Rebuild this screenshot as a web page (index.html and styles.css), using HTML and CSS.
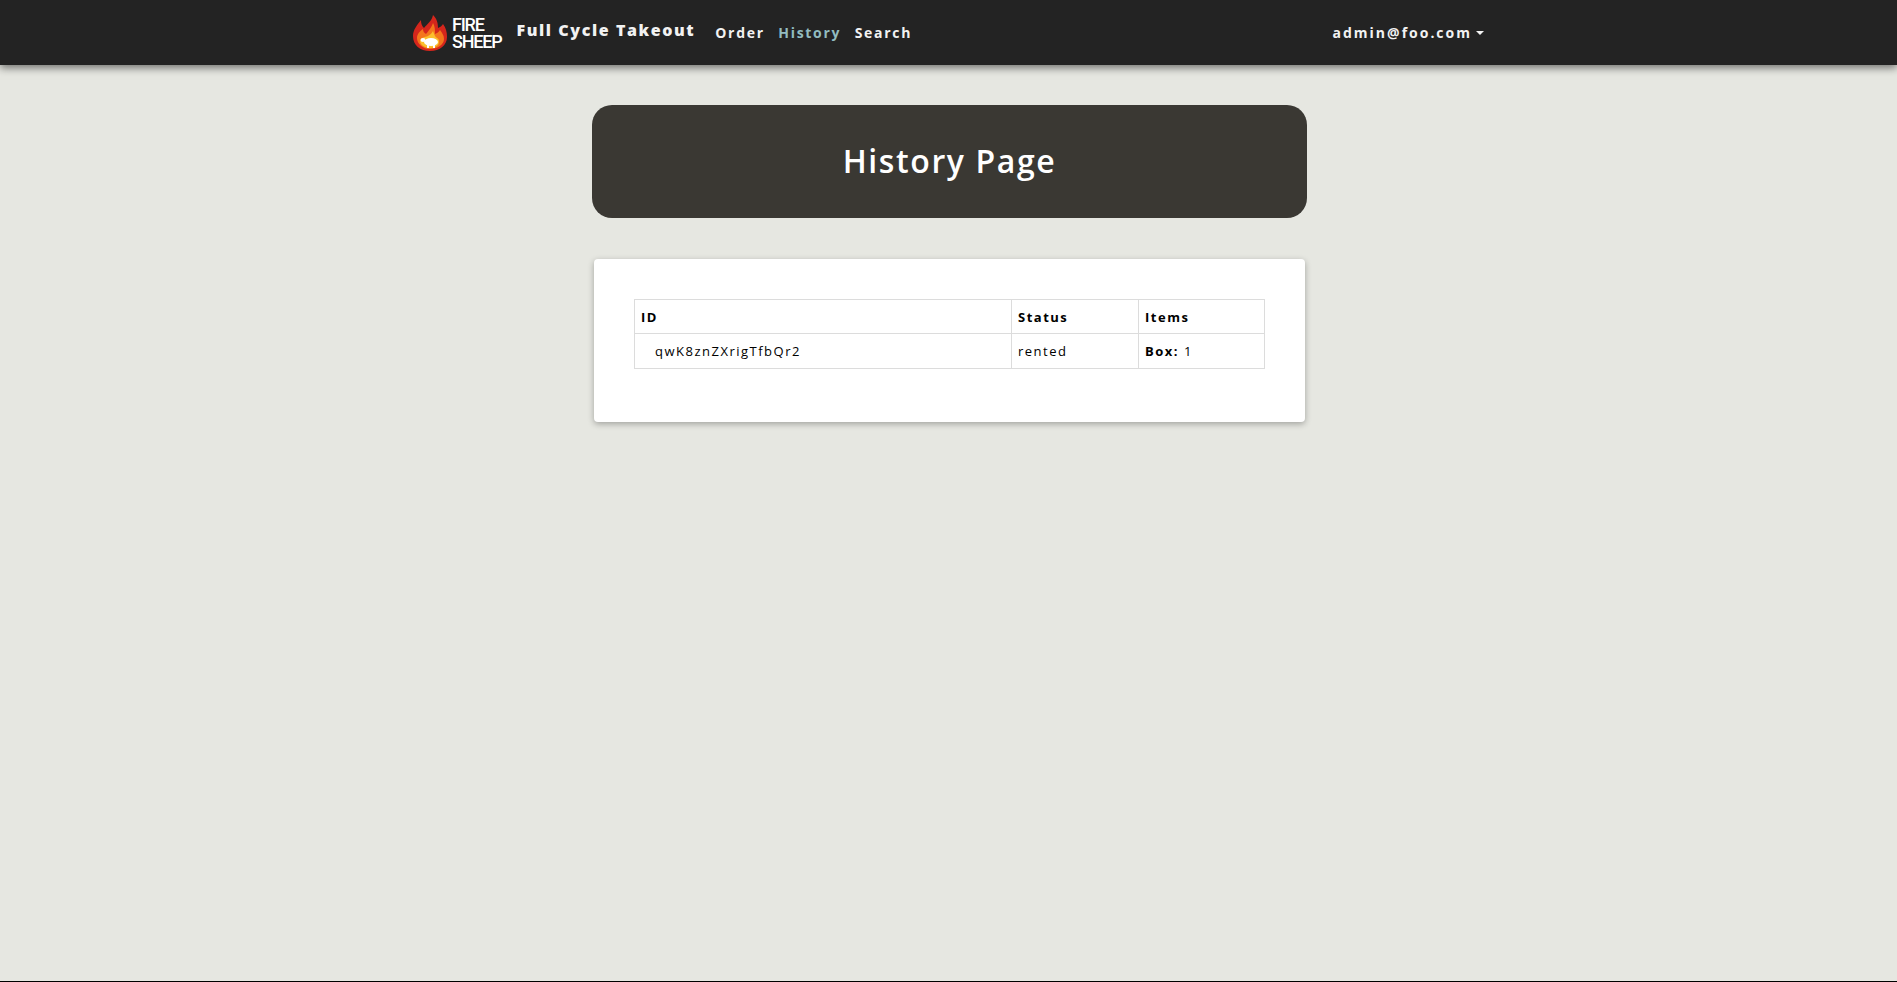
FILE: index.html
```html
<!DOCTYPE html>
<html lang="en">
<head>
  <meta charset="UTF-8" />
  <meta name="viewport" content="width=device-width, initial-scale=1.0"/>
  <title>Full Cycle Takeout - History</title>
  <link rel="stylesheet" href="styles.css">
</head>
<body>
  <nav class="navbar">
    <div class="nav-inner">
      <a class="logo" href="#">
        <svg class="logo-flame" viewBox="0 0 34 36" width="34" height="36">
          <path fill="#d5261c" d="M17 36C7 36 0 30 0 21C0 15 4 10 8 5C8 9 9 11 11 13C14 9 19 6 20 0C24 4 25 8 25 13C27 12 29 11 30 9C33 13 34 17 34 22C34 30 27 36 17 36Z"/>
          <path fill="#f4761c" d="M17 34C10 34 4 29 4 23C4 19 7 16 10 14C10 16 11 18 13 19C16 15 19 12 20 8C22 11 22 15 22 19C24 18 26 17 27 15C29 18 31 20 31 24C31 30 24 34 17 34Z"/>
          <path fill="#fbc02d" d="M17 33C12 33 7 30 7 26C7 23 12 22 15 21C17 20 19 18 20 16C21 19 22 22 24 23C26 24 27 27 25 30C23 32 20 33 17 33Z"/>
          <g fill="#fff">
            <ellipse cx="18" cy="27" rx="7" ry="4"/>
            <ellipse cx="10" cy="25" rx="2.5" ry="2"/>
            <rect x="14" y="29" width="2" height="4"/>
            <rect x="20" y="29" width="2" height="4"/>
          </g>
        </svg>
        <span class="logo-text">FIRE<br>SHEEP</span>
      </a>
      <a class="brand" href="#">Full Cycle Takeout</a>
      <ul class="nav-links">
        <li><a href="#">Order</a></li>
        <li><a class="active" href="#">History</a></li>
        <li><a href="#">Search</a></li>
      </ul>
      <a class="user-menu" href="#">admin@foo.com<span class="caret"></span></a>
    </div>
  </nav>

  <main class="page">
    <header class="hero">
      <h1>History Page</h1>
    </header>

    <section class="card">
      <table class="history-table">
        <thead>
          <tr>
            <th class="col-id">ID</th>
            <th class="col-status">Status</th>
            <th>Items</th>
          </tr>
        </thead>
        <tbody>
          <tr>
            <td class="order-id">qwK8znZXrigTfbQr2</td>
            <td>rented</td>
            <td><b>Box:</b> 1</td>
          </tr>
        </tbody>
      </table>
    </section>
  </main>
</body>
</html>
```

FILE: styles.css
```css
html {
  background-color: #000;
}

body {
  margin: 0;
  min-height: calc(100vh - 1px);
  background-color: #e6e7e1;
  color: #000;
  font-family: "Open Sans", "Noto Sans", sans-serif;
  font-size: 14px;
}

a {
  color: inherit;
  text-decoration: none;
}

.navbar {
  height: 65px;
  background-color: #232323;
  box-shadow: 0 3px 8px rgba(0, 0, 0, 0.5);
  color: #f2f2f2;
}

.nav-inner {
  width: 1087px;
  height: 100%;
  margin: 0 auto;
  padding-left: 8px;
  box-sizing: border-box;
  display: flex;
  align-items: center;
}

.logo {
  display: flex;
  align-items: center;
  gap: 5px;
}

.logo-flame {
  flex: none;
}

.logo-text {
  font-family: Roboto, sans-serif;
  font-size: 18px;
  font-weight: 500;
  line-height: 17px;
  letter-spacing: -1.2px;
  color: #fff;
}

.brand {
  margin: -5px 0 0 15px;
  font-size: 16px;
  font-weight: 800;
  letter-spacing: 1.6px;
}

.nav-links {
  display: flex;
  gap: 13.5px;
  margin: 0 0 0 20px;
  padding: 0;
  list-style-type: none;
  font-weight: 700;
  letter-spacing: 1.7px;
}

.nav-links .active {
  color: #92bcc0;
}

.user-menu {
  margin-left: auto;
  padding-right: 8px;
  font-weight: 700;
  letter-spacing: 2px;
}

.caret {
  display: inline-block;
  margin-left: 4px;
  vertical-align: 3px;
  border-top: 4px solid #f2f2f2;
  border-left: 4px solid transparent;
  border-right: 4px solid transparent;
}

.page {
  width: 715px;
  margin: 0 auto;
  padding: 40px 0 0 2px;
}

.hero {
  height: 113px;
  padding-bottom: 2px;
  box-sizing: border-box;
  display: flex;
  align-items: center;
  justify-content: center;
  background-color: #3a3833;
  border-radius: 20px;
  color: #fff;
}

.hero h1 {
  margin: 0;
  font-size: 32px;
  font-weight: 600;
  letter-spacing: 1.6px;
}

.card {
  margin: 41px 2px 0;
  padding: 40px;
  background-color: #fff;
  border-radius: 4px;
  box-shadow: 0 2px 6px rgba(0, 0, 0, 0.3);
}

.history-table {
  width: 100%;
  margin-bottom: 13px;
  border-collapse: collapse;
  font-size: 13px;
  letter-spacing: 1.5px;
}

.history-table th,
.history-table td {
  height: 34px;
  padding: 0 6px;
  box-sizing: border-box;
  border: 1px solid #dcdcdc;
  text-align: left;
}

.history-table td {
  height: 35px;
}

.history-table th,
.history-table b {
  font-weight: 700;
}

.col-id {
  width: 377px;
}

.col-status {
  width: 127px;
}

.history-table .order-id {
  padding-left: 20px;
}
```
